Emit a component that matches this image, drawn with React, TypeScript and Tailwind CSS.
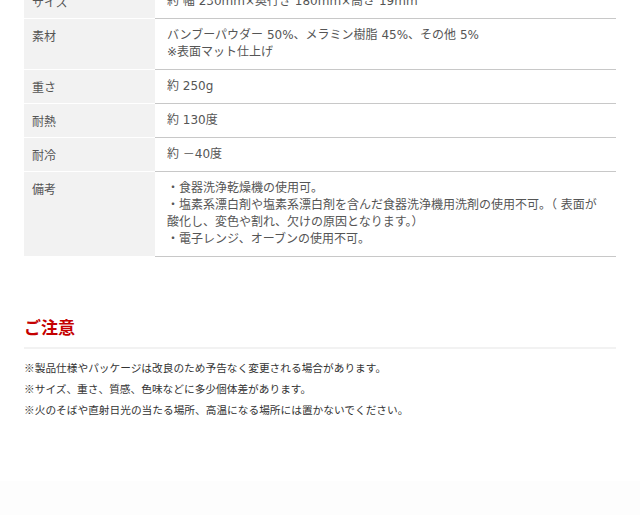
import React from 'react';

interface SpecRow {
  label: string;
  lines: string[];
}

const specs: SpecRow[] = [
  { label: 'サイズ', lines: ['約 幅 230mm×奥行き 180mm×高さ 19mm'] },
  { label: '素材', lines: ['バンブーパウダー 50%、メラミン樹脂 45%、その他 5%', '※表面マット仕上げ'] },
  { label: '重さ', lines: ['約 250g'] },
  { label: '耐熱', lines: ['約 130度'] },
  { label: '耐冷', lines: ['約 －40度'] },
  {
    label: '備考',
    lines: [
      '・食器洗浄乾燥機の使用可。',
      '・塩素系漂白剤や塩素系漂白剤を含んだ食器洗浄機用洗剤の使用不可。（ 表面が',
      '酸化し、変色や割れ、欠けの原因となります。）',
      '・電子レンジ、オーブンの使用不可。',
    ],
  },
];

const notes = [
  '※製品仕様やパッケージは改良のため予告なく変更される場合があります。',
  '※サイズ、重さ、質感、色味などに多少個体差があります。',
  '※火のそばや直射日光の当たる場所、高温になる場所には置かないでください。',
];

export default function App() {
  return (
    <div
      className="h-[515px] overflow-hidden bg-white flex flex-col"
      style={{ fontFamily: '"Noto Sans CJK JP", "Noto Sans", sans-serif' }}
    >
      <div className="px-6">
        <div className="-mt-[15px]">
          {specs.map((row) => (
            <div key={row.label} className="flex">
              <div className="w-[131px] shrink-0 bg-[#f2f2f2] border-b border-white px-2 py-2 text-[12px] leading-[17px] text-[#555]">
                {row.label}
              </div>
              <div
                className="flex-1 border-b border-[#c8c8c8] pl-3 pr-2 py-2 text-[12px] leading-[17px] text-[#555] whitespace-nowrap"
                style={{ fontFamily: '"DejaVu Sans", "Noto Sans CJK JP", sans-serif' }}
              >
                {row.lines.map((line, i) => (
                  <div key={i}>{line}</div>
                ))}
              </div>
            </div>
          ))}
        </div>

        <h2 className="mt-[58px] pb-2 border-b-2 border-[#f2f2f2] text-[17px] leading-6 font-bold text-[#c40000]">
          ご注意
        </h2>

        <div className="mt-2 text-[10.7px] leading-[21px] text-[#333]">
          {notes.map((note, i) => (
            <p key={i}>{note}</p>
          ))}
        </div>
      </div>

      <div className="mt-auto h-[34px] bg-[#fdfdfd]" />
    </div>
  );
}
